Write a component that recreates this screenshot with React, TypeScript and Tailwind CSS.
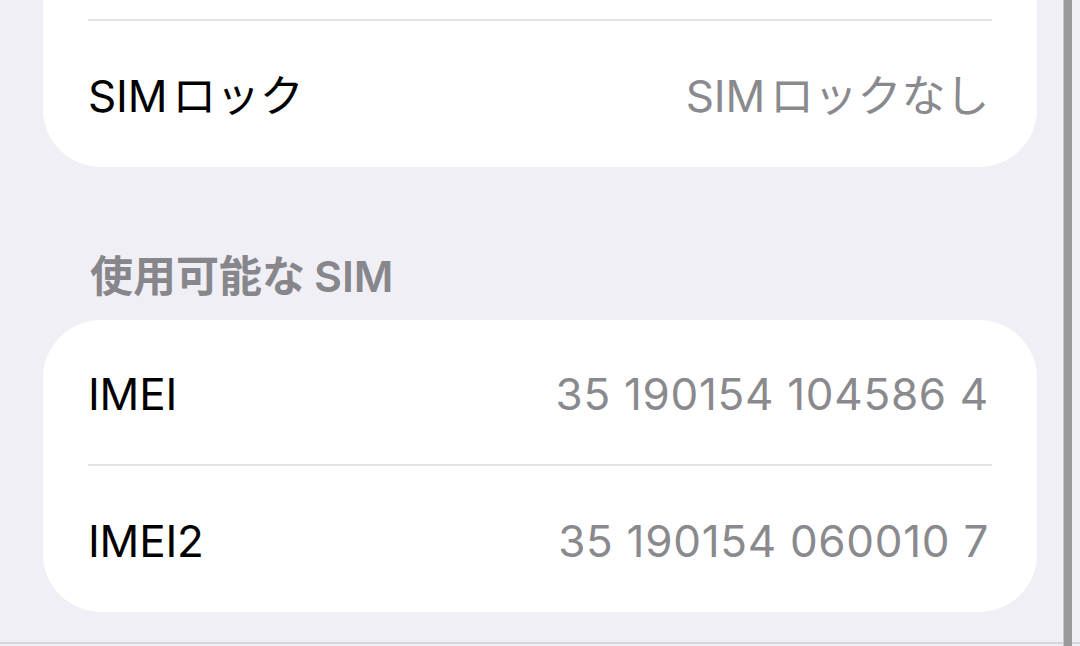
import React from 'react';

const font = { fontFamily: '"Inter", "Noto Sans CJK JP", sans-serif' };

type Row = { label: React.ReactNode; value: React.ReactNode; wide?: boolean };

const Card: React.FC<{ rows: Row[]; className?: string; topDivider?: boolean; tall?: boolean }> = ({
  rows,
  className = '',
  topDivider,
  tall,
}) => (
  <div className={`bg-white mx-[43px] w-[994px] ${className}`}>
    {rows.map((r, i) => (
      <div key={i}>
        {(i > 0 || topDivider) && <div className="mx-[45px] h-[2px] bg-[#e3e3e6]" />}
        <div
          className={`flex items-center justify-between px-[45px] pt-[4px] ${
            tall || i === rows.length - 1 ? 'h-[146px]' : 'h-[144px]'
          }`}
        >
          <span className="text-[44px] text-black leading-none tracking-[-0.2px]">{r.label}</span>
          <span
            className={`text-[44px] text-[#8a8a8e] leading-none pr-[3px] ${
              r.wide ? 'tracking-[0.7px]' : 'tracking-[-0.2px]'
            }`}
          >
            {r.value}
          </span>
        </div>
      </div>
    ))}
  </div>
);

export default function App() {
  return (
    <div className="w-[1080px] h-[646px] overflow-hidden bg-[#f0eff5] flex" style={font}>
      <div className="w-[1063px] flex flex-col">
        <div className="h-[19px] bg-white mx-[43px] w-[994px]" />
        <Card
          topDivider
          tall
          className="rounded-b-[58px]"
          rows={[
            {
              label: (
                <>
                  SIM<span className="ml-[5px]">ロック</span>
                </>
              ),
              value: (
                <>
                  SIM<span className="ml-[5px]">ロックなし</span>
                </>
              ),
            },
          ]}
        />
        <div className="h-[153px] flex items-end pb-[22px] pl-[90px]">
          <span className="text-[43px] font-semibold text-[#87868b] leading-none">
            使用可能な<span className="ml-[9px]">SIM</span>
          </span>
        </div>
        <Card
          className="rounded-[58px]"
          rows={[
            { label: 'IMEI', value: '35 190154 104586 4', wide: true },
            { label: 'IMEI2', value: '35 190154 060010 7', wide: true },
          ]}
        />
        <div className="flex-1" />
        <div className="h-[2px] bg-[#d6d6da] mb-[2px]" />
      </div>
      <div className="w-[9px] bg-[#9a999e] border-l border-[#c8c7cc]" />
      <div className="flex-1 flex flex-col">
        <div className="flex-1" />
        <div className="h-[2px] bg-[#d6d6da] mb-[2px]" />
      </div>
    </div>
  );
}
